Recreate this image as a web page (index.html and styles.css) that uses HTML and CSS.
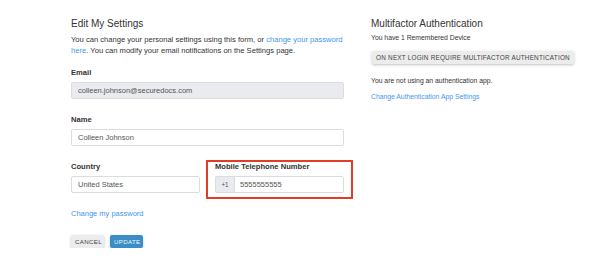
FILE: index.html
```html
<!DOCTYPE html>
<html lang="en">
<head>
    <meta charset="UTF-8">
    <meta name="viewport" content="width=device-width, initial-scale=1.0">
    <title>Edit My Settings</title>
    <link rel="stylesheet" href="styles.css">
</head>
<body>
    <div class="page">
        <!-- Columna izquierda: formulario -->
        <div class="settings-col">
            <div class="section-title">Edit My Settings</div>
            <p class="intro">You can change your personal settings using this form, or <a href="#">change your password here</a>. You can modify your email notifications on the Settings page.</p>
            <div class="form-group">
                <label>Email</label>
                <input class="field" type="text" value="colleen.johnson@securedocs.com" disabled>
            </div>
            <div class="form-group">
                <label>Name</label>
                <input class="field" type="text" value="Colleen Johnson">
            </div>
            <div class="form-row">
                <div class="form-group">
                    <label>Country</label>
                    <input class="field" type="text" value="United States">
                </div>
                <div class="form-group highlighted">
                    <label>Mobile Telephone Number</label>
                    <div class="input-group">
                        <span class="addon">+1</span>
                        <input class="field" type="text" value="5555555555">
                    </div>
                </div>
            </div>
            <a class="pw-link" href="#">Change my password</a>
            <div class="actions">
                <button class="btn btn-light">Cancel</button>
                <button class="btn btn-primary">Update</button>
            </div>
        </div>

        <!-- Columna derecha: MFA -->
        <div class="mfa-col">
            <div class="section-title">Multifactor Authentication</div>
            <div class="small-text">You have 1 Remembered Device</div>
            <button class="btn btn-light btn-wide">On next login require multifactor authentication</button>
            <div class="small-text app-note">You are not using an authentication app.</div>
            <a class="small-link" href="#">Change Authentication App Settings</a>
        </div>
    </div>
</body>
</html>
```

FILE: styles.css
```css
body {
    margin: 0;
    background: #fff;
    color: #333;
    font-family: 'Liberation Sans', Arial, sans-serif;
}
a {
    color: #3f97ec;
    text-decoration: none;
}
.page {
    display: flex;
    gap: 27px;
    padding: 18px 0 0 71px;
}
.settings-col {
    width: 273px;
}
.mfa-col {
    width: 215px;
}
.section-title {
    font-size: 10px;
    line-height: 12px;
    color: #333;
}
.intro {
    margin: 4px 0 0 0;
    font-size: 7.6px;
    line-height: 11px;
}
.form-group {
    margin-top: 12px;
}
.form-group + .form-group,
.form-row {
    margin-top: 16px;
}
.form-row .form-group {
    margin-top: 0;
}
.form-group label {
    display: block;
    font-size: 7.6px;
    line-height: 10px;
    font-weight: bold;
    color: #333;
    margin-bottom: 4px;
}
.field {
    display: block;
    box-sizing: border-box;
    width: 100%;
    height: 17px;
    margin: 0;
    padding: 0 6px;
    border: 1px solid #d9dde1;
    border-radius: 2px;
    background: #fff;
    color: #555;
    font-family: inherit;
    font-size: 7.5px;
}
.field:disabled {
    background: #e9ebee;
    color: #555;
}
.form-row {
    display: flex;
    gap: 15px;
}
.form-row .form-group {
    flex: 1;
}
/* Marco rojo de anotación */
.highlighted {
    position: relative;
}
.highlighted::after {
    content: "";
    position: absolute;
    left: -9px;
    right: -9px;
    top: -2px;
    bottom: -6px;
    border: 2px solid #e23b26;
}
.input-group {
    display: flex;
}
.input-group .addon {
    box-sizing: border-box;
    width: 19px;
    height: 17px;
    line-height: 15px;
    text-align: center;
    font-size: 6.3px;
    color: #555;
    background: #e9ebee;
    border: 1px solid #d9dde1;
    border-right: none;
    border-radius: 2px 0 0 2px;
}
.input-group .field {
    flex: 1;
    border-radius: 0 2px 2px 0;
    padding-left: 5px;
}
.pw-link {
    display: block;
    margin-top: 16px;
    font-size: 7.5px;
    line-height: 10px;
}
.actions {
    display: flex;
    gap: 6px;
    margin-top: 16px;
}
.btn {
    box-sizing: border-box;
    height: 13px;
    padding: 0 4px;
    border: none;
    border-radius: 2px;
    font-family: inherit;
    font-size: 6.2px;
    letter-spacing: 0.3px;
    text-transform: uppercase;
    cursor: pointer;
}
.actions .btn {
    width: 33px;
}
.btn-light {
    background: #ececec;
    color: #444;
    box-shadow: 0 1px 3px rgba(0,0,0,0.25);
}
.btn-primary {
    background: #3a8dc6;
    color: #f4f8fb;
    box-shadow: 0 1px 3px rgba(0,0,0,0.2);
}
.small-text {
    font-size: 6.8px;
    line-height: 10px;
    color: #333;
}
.mfa-col .section-title + .small-text {
    margin-top: 3px;
}
.btn-wide {
    display: block;
    width: 202px;
    margin: 8px 0 0 1px;
    padding: 0;
    font-size: 6.4px;
    letter-spacing: 0.2px;
}
.app-note {
    margin-top: 12px;
}
.small-link {
    display: block;
    margin-top: 6px;
    font-size: 6.8px;
    line-height: 10px;
}
```
